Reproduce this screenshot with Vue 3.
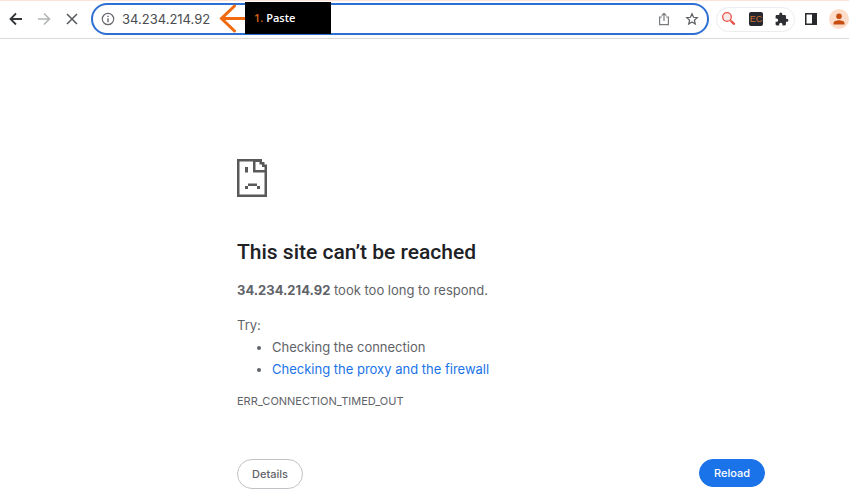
<script setup>
import { ref } from 'vue'

const address = ref('34.234.214.92')
</script>

<template>
  <div class="window">
    <header class="toolbar">
      <nav class="nav">
        <button type="button" class="icon-button" aria-label="Back">
          <svg width="14" height="14" viewBox="0 0 14 14" fill="none" stroke="#333538" stroke-width="1.8">
            <path d="M13 7H1.8M7 1.5L1.5 7L7 12.5" />
          </svg>
        </button>
        <button type="button" class="icon-button" aria-label="Forward">
          <svg width="14" height="14" viewBox="0 0 14 14" fill="none" stroke="#b2b4b6" stroke-width="1.6">
            <path d="M1 7H12.2M7 1.5L12.5 7L7 12.5" />
          </svg>
        </button>
        <button type="button" class="icon-button" aria-label="Stop">
          <svg width="14" height="14" viewBox="0 0 14 14" fill="none" stroke="#55585b" stroke-width="1.5">
            <path d="M2 2L12 12M12 2L2 12" />
          </svg>
        </button>
      </nav>

      <div class="omnibox">
        <svg class="info" width="14" height="14" viewBox="0 0 14 14" fill="none" stroke="#66696d" stroke-width="1.2">
          <circle cx="7" cy="7" r="5.7" />
          <path d="M7 6.2V10.2M7 3.8V5.1" stroke-width="1.4" />
        </svg>
        <input v-model="address" class="address" type="text" aria-label="Address" spellcheck="false" />
        <button type="button" class="icon-button" aria-label="Share">
          <svg width="14" height="14" viewBox="0 0 14 14" fill="none" stroke="#7a7d80" stroke-width="1.2">
            <path d="M5 5H2.6V12.6H11.4V5H9M7 9V1.6M4.700 3.700L7 1.400L9.300 3.700" />
          </svg>
        </button>
        <button type="button" class="icon-button" aria-label="Bookmark">
          <svg width="14" height="14" viewBox="0 0 14 14" fill="none" stroke="#5c5f62" stroke-width="1.2">
            <path d="M7 1.8L8.5 5.300L12.300 5.600L9.400 8.200L10.300 12L7 10L3.700 12L4.600 8.200L1.700 5.600L5.500 5.300Z" />
          </svg>
        </button>
        <div class="callout">
          <svg width="26" height="30" viewBox="0 0 26 30" fill="none" stroke="#f26a0f" stroke-width="3" stroke-linecap="round">
            <path d="M26 15.500H3M15.500 3L2.500 15.500L15.500 28" />
          </svg>
          <div class="callout-label"><span class="step">1.</span> Paste</div>
        </div>
      </div>

      <div class="extensions">
        <button type="button" class="icon-button" aria-label="Search tool">
          <svg width="16" height="16" viewBox="0 0 16 16" fill="none" stroke="#ea5148">
            <circle cx="6" cy="6" r="4.300" stroke-width="1.300" fill="#fbe9e7" />
            <path d="M9.200 9.200L10.700 10.700" stroke-width="1.400" />
            <path d="M10.700 10.700L13 12.800" stroke-width="2.400" stroke-linecap="round" />
          </svg>
        </button>
        <button type="button" class="icon-button ec">EC</button>
        <button type="button" class="icon-button" aria-label="Extensions">
          <svg width="14" height="14" viewBox="1 0 23 23" fill="#2d2f32">
            <path d="M20.5 11H19V7c0-1.1-.9-2-2-2h-4V3.5a2.5 2.5 0 0 0-5 0V5H4c-1.1 0-2 .9-2 2v3.8h1.5a2.7 2.7 0 0 1 0 5.4H2V20c0 1.1.9 2 2 2h3.8v-1.5a2.7 2.7 0 0 1 5.4 0V22H17c1.1 0 2-.9 2-2v-4h1.5a2.5 2.5 0 0 0 0-5z" />
          </svg>
        </button>
      </div>
      <button type="button" class="icon-button panel" aria-label="Side panel">
        <svg width="14" height="14" viewBox="0 0 14 14">
          <path fill="#27292c" fill-rule="evenodd" d="M1 1H13V13H1ZM2.500 2.500V11.500H8V2.500Z" />
        </svg>
      </button>
      <button type="button" class="icon-button avatar" aria-label="Profile">
        <svg width="20" height="20" viewBox="0 0 20 20">
          <circle cx="10" cy="10" r="10" fill="#fddcca" />
          <circle cx="10" cy="7.200" r="2.800" fill="#c64e10" />
          <path fill="#c64e10" d="M4.500 15.500V14C4.500 12.200 7.800 11.200 10 11.200S15.500 12.200 15.500 14V15.500Z" />
        </svg>
      </button>
    </header>

    <main class="page">
      <svg class="sad" width="30" height="38" viewBox="0 0 30 38" fill="#58595b">
        <path fill-rule="evenodd" d="M0 0H25V3H27.500V5.500H30V38H0ZM2.500 2.500V35.500H27.500V13.500H16V2.500ZM18.500 3V11H27.500V8H25V5.500H22.500V3Z" />
        <path d="M8 8H11V13.500H8ZM11 24.500H20V27H11ZM8 27H11V30H8ZM20 27H23V30H20Z" />
      </svg>
      <h1>This site can’t be reached</h1>
      <p class="summary"><strong>34.234.214.92</strong> took too long to respond.</p>
      <p class="try">Try:</p>
      <ul>
        <li>Checking the connection</li>
        <li><a href="#proxy">Checking the proxy and the firewall</a></li>
      </ul>
      <p class="code">ERR_CONNECTION_TIMED_OUT</p>
      <div class="actions">
        <button type="button" class="details">Details</button>
        <button type="button" class="reload">Reload</button>
      </div>
    </main>
  </div>
</template>

<style>
body {
  background: #fff;
}
</style>

<style scoped>
.window {
  font-family: Inter, "Liberation Sans", sans-serif;
  color: #5f6368;
  overflow-x: hidden;
}

.toolbar {
  display: flex;
  align-items: center;
  height: 39px;
  box-sizing: border-box;
  border-top: 1px solid #fde3d8;
  border-bottom: 1px solid #d9d9d9;
  padding: 0 0 1px 9px;
}

.icon-button {
  display: flex;
  flex: none;
  padding: 0;
  border: 0;
  background: none;
}

.nav {
  display: flex;
  gap: 14px;
  margin-right: 12px;
}

.omnibox {
  position: relative;
  display: flex;
  flex: 1;
  align-items: center;
  gap: 14px;
  min-width: 0;
  height: 32px;
  box-sizing: border-box;
  border: 2px solid #2d6fd2;
  border-radius: 16px;
  padding: 0 8px;
}

.info {
  flex: none;
}

.address {
  flex: 1;
  min-width: 0;
  margin-left: -7px;
  padding: 0;
  border: 0;
  outline: 0;
  background: none;
  color: #4a4c4f;
  font: 13px Inter, "Liberation Sans", sans-serif;
}

.callout {
  position: absolute;
  left: 126px;
  top: -3px;
  display: flex;
  align-items: center;
}

.callout-label {
  width: 86px;
  height: 32px;
  box-sizing: border-box;
  padding-left: 9px;
  background: #000;
  color: #fff;
  font: 600 11px/32px "Open Sans", "Noto Sans", sans-serif;
}

.step {
  color: #d9601b;
}

.extensions {
  display: flex;
  align-items: center;
  gap: 12px;
  height: 25px;
  box-sizing: border-box;
  margin-left: 7px;
  padding: 0 5px 0 4px;
  border: 1px solid #ededed;
  border-radius: 13px;
}

.ec {
  justify-content: center;
  width: 14px;
  height: 14px;
  border-radius: 2px;
  background: #25282e;
  color: #d0702f;
  font: 9px/14px "Liberation Sans", sans-serif;
}

.panel {
  margin-left: 9px;
}

.avatar {
  margin: 0 0 0 11px;
}

.page {
  padding: 120px 84px 13px 237px;
}

.sad {
  display: block;
}

h1 {
  margin: 40px 0 0;
  color: #202124;
  font-family: Roboto, "Liberation Sans", sans-serif;
  font-size: 21px;
  font-weight: 500;
  line-height: 30px;
}

p {
  margin: 0;
  font-size: 13px;
  line-height: 21px;
}

.summary {
  margin-top: 13px;
}

.try {
  margin-top: 14px;
}

ul {
  margin: 0;
  padding-left: 35px;
  font-size: 13px;
  line-height: 22px;
}

a {
  color: #1a73e8;
  text-decoration: none;
}

.code {
  margin-top: 11px;
  font-size: 11px;
}

.actions {
  display: flex;
  justify-content: space-between;
  align-items: flex-start;
  margin-top: 47px;
}

.details,
.reload {
  width: 66px;
  height: 30px;
  padding: 0;
  border: 1px solid #bfc2c6;
  border-radius: 15px;
  background: #fff;
  color: #5f6368;
  font: 500 11px Inter, "Liberation Sans", sans-serif;
}

.reload {
  height: 28px;
  border-color: #1a73e8;
  background: #1a73e8;
  color: #fff;
}
</style>
